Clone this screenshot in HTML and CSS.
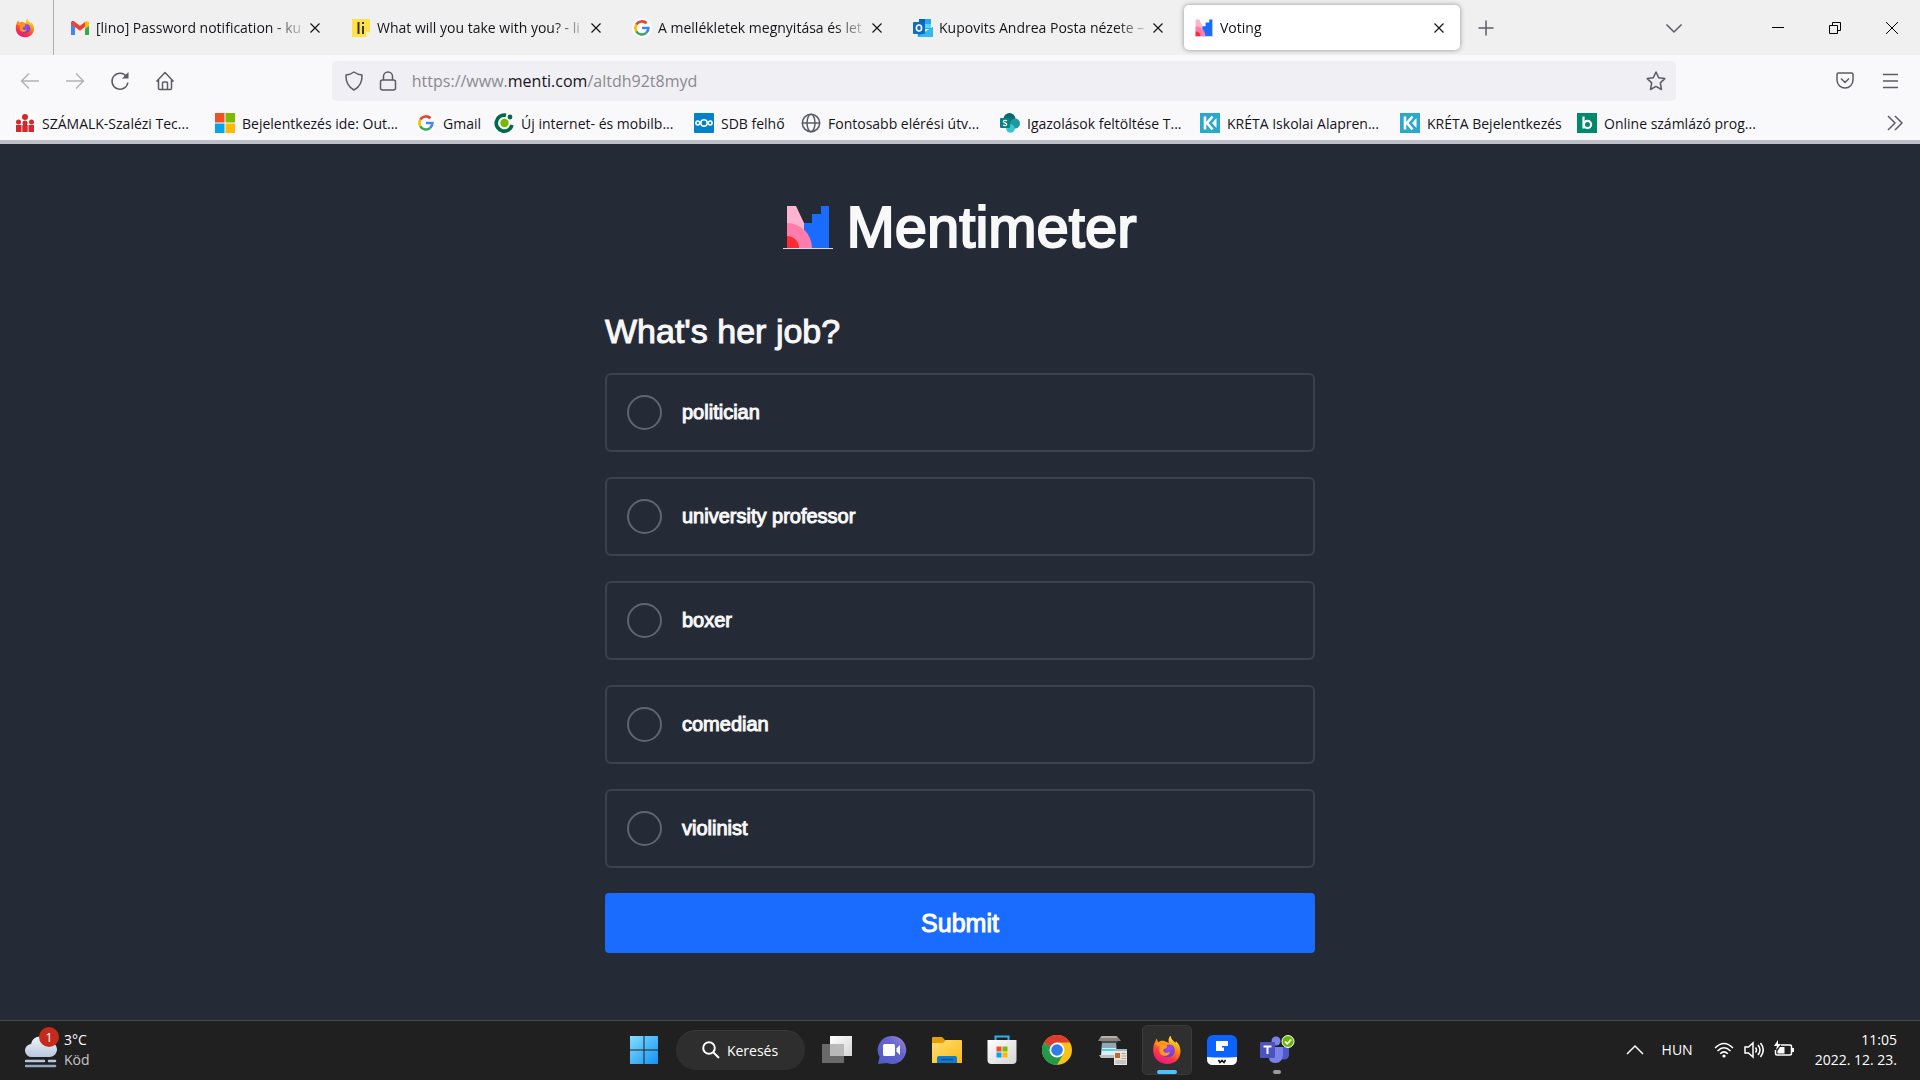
FILE: index.html
```html
<!DOCTYPE html>
<html lang="hu">
<head>
  <meta charset="UTF-8" />
  <meta name="viewport" content="width=device-width, initial-scale=1.0"/>
  <title>Voting</title>
  <link rel="stylesheet" href="styles.css">
</head>
<body>
  <!-- Shared icons -->
  <svg class="sprite" aria-hidden="true">
    <defs>
      <linearGradient id="fxBody" x1="0.8" y1="0" x2="0.3" y2="1">
        <stop offset="0" stop-color="#fff44f"/>
        <stop offset="0.35" stop-color="#ff980e"/>
        <stop offset="0.7" stop-color="#ff3647"/>
        <stop offset="1" stop-color="#e31587"/>
      </linearGradient>
      <radialGradient id="fxCore" cx="0.55" cy="0.3" r="0.8">
        <stop offset="0" stop-color="#a24bf0"/>
        <stop offset="1" stop-color="#5b3fc4"/>
      </radialGradient>
      <linearGradient id="winBlue" x1="0" y1="0" x2="1" y2="1">
        <stop offset="0" stop-color="#86dcff"/>
        <stop offset="1" stop-color="#0f93f5"/>
      </linearGradient>
      <linearGradient id="chatFill" x1="0" y1="1" x2="1" y2="0">
        <stop offset="0" stop-color="#5158c8"/>
        <stop offset="0.6" stop-color="#6364cf"/>
        <stop offset="1" stop-color="#a58ad0"/>
      </linearGradient>
      <linearGradient id="folderFill" x1="0" y1="0" x2="1" y2="1">
        <stop offset="0" stop-color="#ffdf75"/>
        <stop offset="1" stop-color="#fdb913"/>
      </linearGradient>
      <linearGradient id="cloudFill" x1="0" y1="0" x2="0" y2="1">
        <stop offset="0" stop-color="#f1f5fb"/>
        <stop offset="1" stop-color="#b9c7de"/>
      </linearGradient>
      <linearGradient id="glass" x1="0" y1="0" x2="1" y2="1">
        <stop offset="0" stop-color="#ffffff"/>
        <stop offset="1" stop-color="#d5d5d5"/>
      </linearGradient>
    </defs>
    <symbol id="firefox" viewBox="0 0 30 30">
      <path d="M2.5 8 4.6 3.5 6.2 7.2C8.5 5.5 11 5.6 12.8 6.2L17 8C15.8 5 17 2 18.6.8c.4 3.3 2.5 4.6 5 7.3l.2-2.2c3.3 3 4.7 6.500 4.700 10.300C28.500 23.500 22.700 29 15.400 29 7.200 29 1.500 23.200 1.200 16.200 1.100 13 1.500 10.300 2.500 8Z" fill="url(#fxBody)"/>
      <path d="M14 10.300c5-2.400 9.200 1 8.800 5.700-.3 4-3.300 6.300-7.300 6.300-4.500 0-7.300-3-6.900-6.500L11 15l4-2.300Z" fill="url(#fxCore)"/>
      <path d="M3 8.500C5 7 8.500 7.300 10 9.700l5 .5c.4 1.200-.8 2.500-3 3.200-1.200 1.500-.8 3.600 1.200 4.300 1.700.6 3.200-.7 5-.5-1.400 3.300-5 4.500-8 3C6.500 18.400 6.500 14 8 11.500 6.300 10.800 4.500 10.600 3 8.500Z" fill="#ff9a22"/>
    </symbol>
    <symbol id="google" viewBox="0 0 20 20">
      <circle cx="10" cy="10" r="10" fill="#fff"/>
      <path d="M4.300 6.700A6.600 6.600 0 0 1 14.600 5.300" fill="none" stroke="#ea4335" stroke-width="2.600"/>
      <path d="M4.300 6.700a6.600 6.600 0 0 0 0 6.600" fill="none" stroke="#fbbc05" stroke-width="2.600"/>
      <path d="M4.300 13.300a6.600 6.600 0 0 0 9.800 1.800" fill="none" stroke="#34a853" stroke-width="2.600"/>
      <path d="M10 10h6.400a6.500 6.500 0 0 1-2.300 5.100" fill="none" stroke="#4285f4" stroke-width="2.600"/>
    </symbol>
    <symbol id="menti" viewBox="0 0 50 43">
      <path d="M4 0h9l8 17 4 8v16H4Z" fill="#ffb3cf"/>
      <path d="M21 17h8V8h9V0h8v42H21Z" fill="#196cff"/>
      <path d="M4 17a25 25 0 0 1 25 25H4Z" fill="#ff7cab"/>
      <path d="M4 30a12 12 0 0 1 12 12H4Z" fill="#ff2b33"/>
      <path d="M0 42.500h50" stroke="#d9dce0" stroke-width="1"/>
    </symbol>
    <symbol id="close" viewBox="0 0 12 12">
      <path d="M1.500 1.500l9 9m0-9l-9 9" fill="none" stroke="currentColor" stroke-width="1.200"/>
    </symbol>
    <symbol id="kreta" viewBox="0 0 20 20">
      <path fill="#2aa9cd" d="M0 0h20v20H0z"/>
      <path d="M5 3.500v13M12.500 3.500 7 10l5.500 6.500" fill="none" stroke="#fff" stroke-width="2.600"/>
      <path d="M16.500 5v10L12 10Z" fill="#fff"/>
    </symbol>
  </svg>

  <header class="browser">
    <div class="tab-bar">
      <button class="pinned" aria-label="Firefox View"><svg class="icon"><use href="#firefox"/></svg></button>
      <div class="tabs">
        <div class="tab">
          <svg class="icon" viewBox="0 0 20 20"><path d="M1 4v13h4V9Z" fill="#4285f4"/><path d="M19 4v13h-4V9Z" fill="#34a853"/><path d="M1 5c0-2 2-2.500 3.300-1.500L10 7.800l5.700-4.300v4.700L10 12.700 1 6.300Z" fill="#ea4335"/><path d="M15 4c1.500-1.500 4-.8 4 1v3l-4 3Z" fill="#fbbc04"/></svg>
          <span class="tab-title">[lino] Password notification - ku</span>
          <button class="tab-close" aria-label="Close tab"><svg><use href="#close"/></svg></button>
        </div>
        <div class="tab">
          <svg class="icon" viewBox="0 0 20 20"><path d="M1 1h18v13l-4 5H1Z" fill="#ffe14a"/><path d="M15 19l4-5h-4Z" fill="#fff3a5"/><path d="M7.500 4v12" stroke="#3b3412" stroke-width="2"/><path d="M12 8v8" stroke="#3b3412" stroke-width="2"/><path d="M11 4h2v2h-2z" fill="#3b3412"/></svg>
          <span class="tab-title">What will you take with you? - li</span>
          <button class="tab-close" aria-label="Close tab"><svg><use href="#close"/></svg></button>
        </div>
        <div class="tab">
          <svg class="icon"><use href="#google"/></svg>
          <span class="tab-title">A mellékletek megnyitása és let</span>
          <button class="tab-close" aria-label="Close tab"><svg><use href="#close"/></svg></button>
        </div>
        <div class="tab">
          <svg class="icon" viewBox="0 0 20 20"><path d="M6 1h12v10H6z" fill="#28a8ea"/><path d="M6 1h6v5H6z" fill="#0364b8"/><path d="M12 6h6v4h-6z" fill="#50d9ff"/><path d="M4 9l8 5 8-5v10H5Z" fill="#1490df"/><path d="M4 19 20 9v10Z" fill="#35b8f1"/><rect y="4" width="12" height="12" rx="1" fill="#0f6cbd"/><ellipse cx="6" cy="10" rx="2.600" ry="3" fill="none" stroke="#fff" stroke-width="1.600"/></svg>
          <span class="tab-title">Kupovits Andrea Posta nézete –</span>
          <button class="tab-close" aria-label="Close tab"><svg><use href="#close"/></svg></button>
        </div>
        <div class="tab active">
          <svg class="icon"><use href="#menti"/></svg>
          <span class="tab-title">Voting</span>
          <button class="tab-close" aria-label="Close tab"><svg><use href="#close"/></svg></button>
        </div>
      </div>
      <button class="new-tab" aria-label="New tab"><svg class="line-icon" viewBox="0 0 20 20"><path d="M10 2.500v15M2.500 10h15"/></svg></button>
      <div class="window-controls">
        <button class="all-tabs" aria-label="List all tabs"><svg class="line-icon" viewBox="0 0 20 20"><path d="M2.500 6.500l7.500 7.500 7.500-7.500"/></svg></button>
        <button aria-label="Minimize"><svg class="win-icon" viewBox="0 0 14 14"><path d="M1 6.500h12"/></svg></button>
        <button aria-label="Restore"><svg class="win-icon" viewBox="0 0 14 14"><path d="M1.500 4.500h8v8h-8zM4.500 4V1.500h8v8H10"/></svg></button>
        <button aria-label="Close"><svg class="win-icon" viewBox="0 0 14 14"><path d="M1 1l12 12M13 1L1 13"/></svg></button>
      </div>
    </div>

    <nav class="toolbar">
      <div class="nav-buttons">
        <button class="disabled" aria-label="Back"><svg class="line-icon" viewBox="0 0 20 20"><path d="M19 10H1.500M9 2.500 1.500 10 9 17.500"/></svg></button>
        <button class="disabled" aria-label="Forward"><svg class="line-icon" viewBox="0 0 20 20"><path d="M1 10h17.500M11 2.500l7.500 7.500-7.500 7.500"/></svg></button>
        <button aria-label="Reload"><svg class="line-icon" viewBox="0 0 20 20"><path d="M16.500 5.500A8 8 0 1 0 17.900 11.500"/><path d="M18.500 1v6.500H12Z" fill="currentColor" stroke="none"/></svg></button>
        <button aria-label="Home"><svg class="line-icon" viewBox="0 0 20 20"><path d="M1.500 10.500 10 1.500l8.500 9M3.500 9v8.500q0 1 1 1h11q1 0 1-1V9M7.500 18.500V12q0-1 1-1h3q1 0 1 1v6.500"/></svg></button>
      </div>
      <div class="url-bar">
        <svg class="line-icon" viewBox="0 0 20 20"><path d="M10 1q3.500 2.600 8 3c.3 7-2.500 12-8 15-5.500-3-8.300-8-8-15q4.500-.4 8-3Z"/></svg>
        <svg class="line-icon" viewBox="0 0 20 20"><rect x="2.500" y="9" width="15" height="10" rx="2"/><path d="M5.500 9V5.500a4.500 4.500 0 0 1 9 0V9"/></svg>
        <div class="url" role="textbox" contenteditable="true" aria-label="Address" spellcheck="false">https://www.<b>menti.com</b>/altdh92t8myd</div>
        <button aria-label="Bookmark this page"><svg class="line-icon" viewBox="0 0 20 20"><path d="M10 1l2.700 5.800 6.100.8-4.500 4.300 1.200 6.600L10 15.400l-5.500 3.100 1.200-6.600L1.200 7.600l6.100-.8Z"/></svg></button>
      </div>
      <div class="toolbar-end">
        <button aria-label="Save to Pocket"><svg class="line-icon" viewBox="0 0 20 20"><path d="M3.500 2h13q1.500 0 1.500 1.500V9a8 8 0 0 1-16 0V3.500Q2 2 3.500 2ZM6 7.500l4 4 4-4"/></svg></button>
        <button aria-label="Open menu"><svg class="line-icon" viewBox="0 0 20 20"><path d="M3 3.500h15M3 10h15M3 16.500h15"/></svg></button>
      </div>
    </nav>

    <nav class="bookmarks">
      <a href="#"><svg class="icon" viewBox="0 0 20 20"><path fill="#fff" d="M0 0h20v20H0z"/><g fill="#d8262c"><circle cx="10" cy="4" r="3"/><circle cx="3.500" cy="9" r="2.500"/><circle cx="16.500" cy="9" r="2.500"/><circle cx="10" cy="10" r="2.500"/><path d="M1 12h5.500v7H1zM7.300 12h5.400v7H7.300zM13.500 12H19v7h-5.500z"/></g></svg><span>SZÁMALK-Szalézi Tec...</span></a>
      <a href="#"><svg class="icon" viewBox="0 0 20 20"><path fill="#f25022" d="M0 0h9.500v9.500H0z"/><path fill="#7fba00" d="M10.500 0H20v9.500h-9.500z"/><path fill="#00a4ef" d="M0 10.500h9.500V20H0z"/><path fill="#ffb900" d="M10.500 10.500H20V20h-9.500z"/></svg><span>Bejelentkezés ide: Out...</span></a>
      <a href="#"><svg class="icon"><use href="#google"/></svg><span>Gmail</span></a>
      <a href="#"><svg class="icon" viewBox="0 0 20 20"><path d="M12 2.300a8 8 0 1 0 6 9.700" fill="none" stroke="#00674a" stroke-width="3.600"/><circle cx="10.500" cy="10" r="4.200" fill="#79b800"/><circle cx="16" cy="4" r="2.400" fill="#00674a"/></svg><span>Új internet- és mobilb...</span></a>
      <a href="#"><svg class="icon" viewBox="0 0 20 20"><rect width="20" height="20" rx="1" fill="#0082c9"/><g fill="none" stroke="#fff" stroke-width="1.500"><circle cx="10" cy="10" r="3.200"/><circle cx="3.800" cy="10" r="1.900"/><circle cx="16.200" cy="10" r="1.900"/></g></svg><span>SDB felhő</span></a>
      <a href="#"><svg class="icon line-icon" viewBox="0 0 20 20"><circle cx="10" cy="10" r="8.700"/><ellipse cx="10" cy="10" rx="4" ry="8.700"/><path d="M1.500 10h17"/></svg><span>Fontosabb elérési útv...</span></a>
      <a href="#"><svg class="icon" viewBox="0 0 20 20"><circle cx="9.500" cy="6" r="6" fill="#036c70"/><circle cx="15" cy="10.500" r="5" fill="#1a9ba1"/><circle cx="10.500" cy="15.500" r="4.300" fill="#37c6d0"/><rect y="5" width="10" height="10" rx="1" fill="#038387"/><path d="M7 7.800C5.500 6.900 3.300 7.200 3.400 8.700c.1 1.500 3.400 1 3.400 2.600 0 1.500-2.300 1.700-3.700.8" fill="none" stroke="#fff" stroke-width="1.200"/></svg><span>Igazolások feltöltése T...</span></a>
      <a href="#"><svg class="icon"><use href="#kreta"/></svg><span>KRÉTA Iskolai Alapren...</span></a>
      <a href="#"><svg class="icon"><use href="#kreta"/></svg><span>KRÉTA Bejelentkezés</span></a>
      <a href="#"><svg class="icon" viewBox="0 0 20 20"><path fill="#00896b" d="M0 0h20v20H0z"/><path d="M6.500 3.500v12" stroke="#fff" stroke-width="2.200"/><circle cx="10.500" cy="11.500" r="3.600" fill="none" stroke="#fff" stroke-width="2.200"/></svg><span>Online számlázó prog...</span></a>
      <button aria-label="More bookmarks"><svg class="line-icon" viewBox="0 0 20 20"><path d="M3 3l7 7-7 7M10 3l7 7-7 7"/></svg></button>
    </nav>
  </header>

  <main class="vote">
    <div class="logo">
      <svg class="logo-mark"><use href="#menti"/></svg>
      <span class="logo-text">Mentimeter</span>
    </div>
    <form class="question">
      <h1>What's her job?</h1>
      <label class="option"><input type="radio" name="job" value="politician"><span>politician</span></label>
      <label class="option"><input type="radio" name="job" value="professor"><span>university professor</span></label>
      <label class="option"><input type="radio" name="job" value="boxer"><span>boxer</span></label>
      <label class="option"><input type="radio" name="job" value="comedian"><span>comedian</span></label>
      <label class="option"><input type="radio" name="job" value="violinist"><span>violinist</span></label>
      <button class="submit" type="button">Submit</button>
    </form>
  </main>

  <footer class="taskbar">
    <button class="weather">
      <span class="weather-icon">
        <svg viewBox="0 0 32 36"><path d="M7 25a6.500 6.500 0 0 1-1-13 9.500 9.500 0 0 1 18-2 7.500 7.500 0 0 1 1 15Z" fill="url(#cloudFill)"/><path d="M1 29h18M24 29h6" stroke="#b8c8dc" stroke-width="2.600" stroke-linecap="round"/><path d="M1 34h29" stroke="#8fa8c4" stroke-width="2.600" stroke-linecap="round"/></svg>
        <span class="badge">1</span>
      </span>
      <span class="weather-text">3°C<br><span class="muted">Köd</span></span>
    </button>

    <div class="apps">
      <button class="app" aria-label="Start"><svg viewBox="0 0 30 30"><path d="M1 1h13.500v13.500H1zM15.500 1H29v13.500H15.500zM1 15.500h13.500V29H1zM15.500 15.500H29V29H15.500z" fill="url(#winBlue)"/></svg></button>
      <button class="search"><svg viewBox="0 0 18 18"><circle cx="7" cy="7" r="5.800"/><path d="M11.500 11.500 17 17"/></svg>Keresés</button>
      <button class="app" aria-label="Task view"><svg viewBox="0 0 30 30"><path d="M8 1h22v20H8z" fill="url(#glass)"/><path d="M0 9h22v19H0z" fill="#777" fill-opacity="0.850"/><path d="M8 9h14v12H8z" fill="#b9b9b9"/></svg></button>
      <button class="app" aria-label="Chat"><svg viewBox="0 0 30 30"><path d="M15 1a14 14 0 1 1-5 27L1 29l1.600-7A14 14 0 0 1 15 1Z" fill="url(#chatFill)"/><rect x="6" y="9" width="12" height="12" rx="1.500" fill="#fff"/><path d="M19.500 13.500 23 10v10l-3.500-3.500Z" fill="#fff"/></svg></button>
      <button class="app" aria-label="File Explorer"><svg viewBox="0 0 30 30"><path d="M0 3q0-1 1-1h9l3 3h13v6H0Z" fill="#e59e08"/><path d="M0 8h11l3-3h15q1 0 1 1v22H0Z" fill="url(#folderFill)"/><path d="M5 28v-5q0-2 2-2h16q2 0 2 2v5Z" fill="#0f7ad1"/><path d="M9 24.500h12" stroke="#0a4d93" stroke-width="1.300"/></svg></button>
      <button class="app" aria-label="Microsoft Store"><svg viewBox="0 0 30 30"><path d="M8.500 6V1.500h13V6" fill="none" stroke="#2cb3ee" stroke-width="2"/><path d="M.500 5h29v20q0 4-4 4h-21q-4 0-4-4Z" fill="url(#glass)"/><path fill="#f25022" d="M9.500 11.500h5v5h-5z"/><path fill="#7fba00" d="M15.500 11.500h5v5h-5z"/><path fill="#00a4ef" d="M9.500 17.500h5v5h-5z"/><path fill="#ffb900" d="M15.500 17.500h5v5h-5z"/></svg></button>
      <button class="app" aria-label="Chrome"><svg viewBox="0 0 30 30"><circle cx="15" cy="15" r="15" fill="#fbc116"/><path d="M15 15 2 7.500A15 15 0 0 1 28 7.500H15Z" fill="#df3b2f"/><path d="M2 7.500A15 15 0 0 0 15 30l6.500-11.200L15 15l-6.500 3.800Z" fill="#229a4a"/><path d="M2 7.500 8.500 18.800 15 15Z" fill="#229a4a"/><circle cx="15" cy="15" r="7.500" fill="#fff"/><circle cx="15" cy="15" r="5.800" fill="#2f7de9"/></svg></button>
      <button class="app" aria-label="Scanner"><svg viewBox="0 0 30 30"><path d="M4 1h16l4 5H1Z" fill="#8a8480"/><path d="M5 1h14l1 2H4Z" fill="#b5b0ac"/><path d="M4 6h17l-1 2H5Z" fill="#4c4c4c"/><path d="M5 8h14l1 13H4Z" fill="#d7eef5"/><path d="M5 8h14v5H5z" fill="#8fa9b4"/><path d="M5 14h14v2H5z" fill="#4fcbe8"/><path d="M2 20h17v3H4Z" fill="#bdbdbd"/><path d="M17 14h13v16H17z" fill="#e9e5dc"/><path d="M17 14h13v2H17z" fill="#9db8ce"/><path d="M18 18h5v5h-5z" fill="#b66b30"/><path d="M24.500 18.500H29M24.500 21H29M24.500 23.500H29M18.500 26H29M18.500 28H29" stroke="#a5a5a5"/></svg></button>
      <button class="app running" aria-label="Firefox"><svg><use href="#firefox"/></svg></button>
      <button class="app" aria-label="Filmora"><svg viewBox="0 0 30 30"><rect width="30" height="30" rx="6" fill="#0a63ff"/><path d="M0 22q15 1 30 0v2q0 6-6 6H6q-6 0-6-6Z" fill="#fff"/><path d="M9 6h12v5h-6v1.500h2V16h-8Z" fill="#fff"/><path d="M11.500 25l1.500 2.500 2-2 2 2 1.500-2.500" fill="none" stroke="#111" stroke-width="1.600"/></svg></button>
      <button class="app idle" aria-label="Teams"><svg class="wide" viewBox="0 0 36 30"><circle cx="17" cy="6" r="4.500" fill="#7b83eb"/><path d="M20 12h10v9q-2 5-8 3Z" fill="#5059c9"/><path d="M10 12h14v8q-1 8-7.500 8T10 22Z" fill="#7b83eb"/><rect x="1" y="7" width="15" height="16" rx="1" fill="#4b53bc"/><path d="M4.500 11.500h8M8.500 11.500V19" stroke="#fff" stroke-width="2"/><circle cx="29" cy="6.500" r="6" fill="#6bb700" stroke="#fff" stroke-width="1"/><path d="M26 6.500l2.200 2.300 4-4.300" fill="none" stroke="#fff" stroke-width="1.800"/></svg></button>
    </div>

    <div class="tray">
      <button aria-label="Show hidden icons"><svg viewBox="0 0 20 20"><path d="M2 14l8-8 8 8"/></svg></button>
      <button class="language">HUN</button>
      <button class="status" aria-label="Network, sound, battery">
        <svg viewBox="0 0 20 20"><path d="M1 8q9-9 18 0M3.500 11q6.500-6.500 13 0M6.200 13.800q3.800-3.800 7.600 0"/><circle cx="10" cy="16" r="1.600" fill="#fff" stroke="none"/></svg>
        <svg viewBox="0 0 20 20"><path d="M1 7h3.500L9 3v14l-4.500-4H1ZM11.500 7.500q2 2.500 0 5M14 5q4 5 0 10M16.500 3q5.500 7 0 14"/></svg>
        <svg viewBox="0 0 20 20"><path d="M7 5h9q1.500 0 1.500 1.500v7q0 1.500-1.500 1.500H3q-1.500 0-1.500-1.500V10"/><path d="M6 7h4.500v6.500H3.500V11ZM18 8h2v4h-2zM4 0 0 6h3l-1 4 5-6H4Z" fill="#fff" stroke="none"/></svg>
      </button>
      <button class="clock">11:05<br>2022. 12. 23.</button>
    </div>
  </footer>
</body>
</html>
```
FILE: styles.css
```css
* {
  box-sizing: border-box;
}

body {
  margin: 0;
  min-height: 100vh;
  display: flex;
  flex-direction: column;
  font-family: "Segoe UI", "Open Sans", "Noto Sans", sans-serif;
  font-size: 14px;
  background-color: #252b36;
  color: #15141a;
}

button {
  display: flex;
  align-items: center;
  justify-content: center;
  padding: 0;
  border: none;
  background: none;
  color: inherit;
  font: inherit;
  cursor: pointer;
}

svg {
  display: block;
  flex: none;
}

.sprite {
  position: absolute;
  width: 0;
  height: 0;
}

.icon {
  width: 20px;
  height: 20px;
}

.line-icon {
  width: 20px;
  height: 20px;
  fill: none;
  stroke: currentColor;
  stroke-width: 1.5;
  stroke-linejoin: round;
}

/* Browser window */

.browser {
  background-color: #f9f9fb;
  border-bottom: 4px solid #bfc0c7;
}

.tab-bar {
  display: flex;
  align-items: center;
  height: 55px;
  background-color: #f0f0f0;
}

.pinned {
  width: 54px;
  height: 55px;
  padding-right: 4px;
  border-right: 1px solid #b0b0b4;
}

.tabs {
  display: flex;
  gap: 5px;
  margin-left: 6px;
}

.tab {
  display: flex;
  align-items: center;
  gap: 6px;
  width: 276px;
  height: 45px;
  padding: 0 15px 0 10px;
  border-radius: 5px;
}

.tab.active {
  background-color: #fff;
  box-shadow: 0 0 5px rgba(0, 0, 0, 0.4);
}

.tab-title {
  flex: 1;
  white-space: nowrap;
  mask-image: linear-gradient(to left, transparent, #000 36px);
}

.tab-close {
  width: 12px;
  height: 20px;
  margin-left: -6px;
}

.tab-close svg {
  width: 12px;
  height: 12px;
}

.new-tab {
  width: 40px;
  height: 40px;
  margin-left: 6px;
  color: #5b5b66;
}

.window-controls {
  display: flex;
  align-items: center;
  margin-left: auto;
}

.window-controls button {
  width: 57px;
  height: 55px;
}

.window-controls .all-tabs {
  margin-right: 47px;
  color: #5b5b66;
}

.win-icon {
  width: 14px;
  height: 14px;
  fill: none;
  stroke: #000;
  stroke-width: 1;
}

.toolbar {
  display: flex;
  align-items: center;
  height: 51px;
  padding: 0 8px 0 7px;
  color: #5b5b66;
}

.nav-buttons,
.toolbar-end {
  display: flex;
}

.nav-buttons {
  flex: 11;
}

.toolbar-end {
  flex: 8;
  justify-content: flex-end;
}

.nav-buttons button,
.toolbar-end button {
  width: 45px;
  height: 40px;
}

.disabled {
  opacity: 0.45;
}

.url-bar {
  display: flex;
  align-items: center;
  gap: 14px;
  width: 70vw;
  height: 40px;
  padding: 0 10px 0 12px;
  border-radius: 5px;
  background-color: #f0eff4;
}

.url {
  flex: 1;
  font-size: 16px;
  color: #8a8a91;
  outline: none;
}

.url b {
  font-weight: normal;
  color: #15141a;
}

.bookmarks {
  display: grid;
  grid-template-columns: 200px 201px 78px 200px 107px 199px 200px 200px 177px 1fr 50px;
  align-items: center;
  height: 34px;
  padding-left: 15px;
}

.bookmarks a {
  display: flex;
  align-items: center;
  gap: 7px;
  color: inherit;
  text-decoration: none;
  white-space: nowrap;
}

.bookmarks .line-icon {
  color: #5b5b66;
}

/* Voting page */

.vote {
  flex: 1;
  display: flex;
  flex-direction: column;
  align-items: center;
  padding: 51px 20px 20px;
  font-family: "Liberation Sans", Arial, sans-serif;
  color: #f8f8f9;
}

.logo {
  display: flex;
  align-items: center;
  gap: 13px;
  margin-bottom: 50px;
}

.logo-mark {
  width: 50px;
  height: 43px;
}

.logo-text {
  font-size: 58px;
  line-height: 64px;
  -webkit-text-stroke: 2px #f8f8f9;
}

.question {
  display: flex;
  flex-direction: column;
  gap: 25px;
  width: 100%;
  max-width: 710px;
}

.question h1 {
  margin: 0 0 -5px;
  font-size: 34px;
  font-weight: normal;
  line-height: 44px;
  -webkit-text-stroke: 1px #f8f8f9;
}

.option {
  display: flex;
  align-items: center;
  gap: 20px;
  padding: 20px;
  border: 2px solid #3c414c;
  border-radius: 6px;
  font-size: 20px;
  -webkit-text-stroke: 1px #f8f8f9;
  cursor: pointer;
}

.option input {
  appearance: none;
  width: 35px;
  height: 35px;
  margin: 0;
  border: 2px solid #5f646e;
  border-radius: 50%;
}

.option input:checked {
  border: 10px solid #196cff;
}

.submit {
  height: 60px;
  border-radius: 4px;
  background-color: #196cff;
  color: #fff;
  font-size: 25px;
  -webkit-text-stroke: 1px #fff;
}

/* Windows taskbar */

.taskbar {
  display: grid;
  grid-template-columns: 1fr auto 1fr;
  align-items: center;
  height: 60px;
  padding-bottom: 2px;
  border-top: 1px solid #4b4b4b;
  background-color: #202020;
  color: #fff;
}

.weather {
  justify-self: start;
  gap: 7px;
  padding-left: 25px;
  line-height: 20px;
  text-align: left;
}

.weather-icon {
  position: relative;
}

.weather-icon svg {
  width: 32px;
  height: 36px;
}

.badge {
  position: absolute;
  top: -5px;
  right: -2px;
  width: 20px;
  height: 20px;
  border-radius: 50%;
  background-color: #c42b1c;
  font-size: 13px;
  text-align: center;
}

.muted {
  color: #c5c5c5;
}

.apps {
  display: flex;
  align-items: center;
  gap: 5px;
}

.app {
  position: relative;
  width: 50px;
  height: 50px;
  border: 1px solid transparent;
  border-radius: 5px;
}

.app svg {
  width: 30px;
  height: 30px;
}

.app .wide {
  width: 36px;
}

.running {
  border-color: #3a3a3a;
  background-color: #2f2f2f;
}

.running::after,
.idle::after {
  content: "";
  position: absolute;
  bottom: 0;
  width: 20px;
  height: 4px;
  border-radius: 2px;
  background-color: #4cc2ff;
}

.idle::after {
  width: 8px;
  background-color: #9a9a9a;
}

.search {
  gap: 7px;
  width: 129px;
  height: 40px;
  margin: 0 2px;
  border-radius: 20px;
  background-color: #2e2e2e;
  border-top: 1px solid #3a3a3a;
}

.search svg {
  width: 18px;
  height: 18px;
  fill: none;
  stroke: #fff;
  stroke-width: 2;
}

.tray {
  display: flex;
  align-items: center;
  justify-content: flex-end;
  gap: 17px;
  padding-right: 23px;
}

.tray svg {
  width: 20px;
  height: 20px;
  fill: none;
  stroke: #fff;
  stroke-width: 1.5;
}

.status {
  gap: 10px;
  margin-left: 4px;
}

.clock {
  margin-left: 4px;
  line-height: 20px;
  text-align: right;
}
```
